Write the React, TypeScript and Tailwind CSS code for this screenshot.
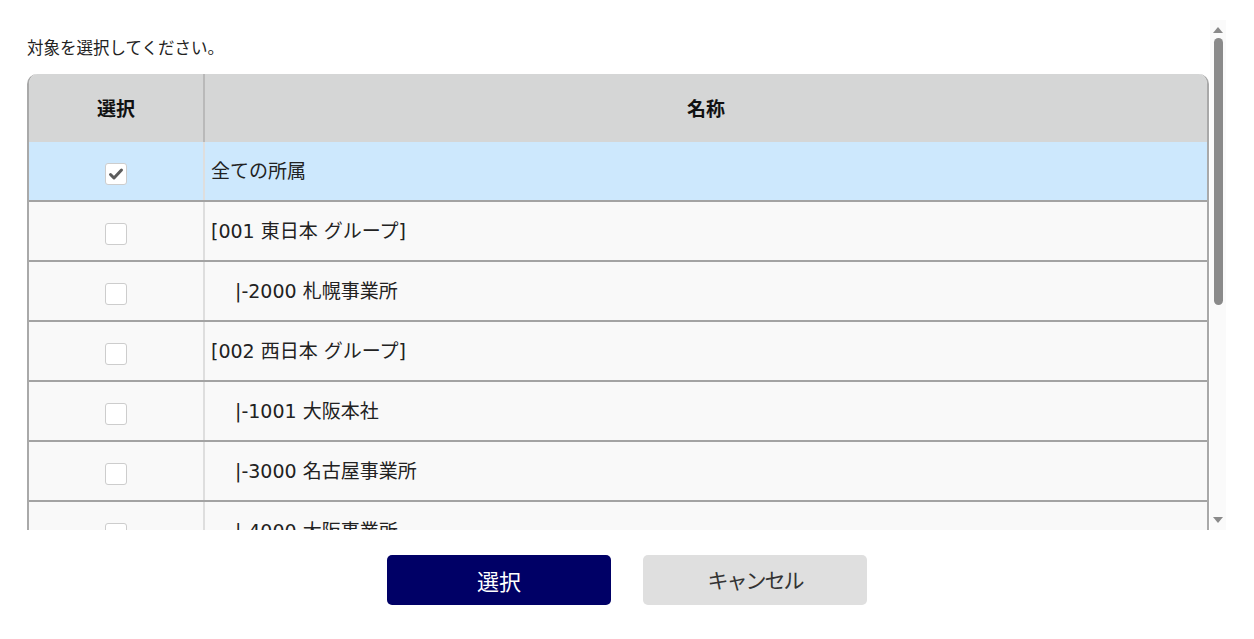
import React from "react";

const FONT = { fontFamily: '"Noto Sans CJK JP", "Noto Sans", sans-serif' };
const ROW_FONT = { fontFamily: '"DejaVu Sans", "Noto Sans CJK JP", sans-serif' };

type Row = { name: string; indent?: boolean; checked?: boolean };

const rows: Row[] = [
  { name: "全ての所属", checked: true },
  { name: "[001 東日本 グループ]" },
  { name: "|-2000 札幌事業所", indent: true },
  { name: "[002 西日本 グループ]" },
  { name: "|-1001 大阪本社", indent: true },
  { name: "|-3000 名古屋事業所", indent: true },
  { name: "|-4000 大阪事業所", indent: true },
];

function Check({ on }: { on?: boolean }) {
  return (
    <div className="w-[22px] h-[22px] rounded-[3px] border border-[#cdcdcd] bg-white flex items-center justify-center">
      {on && (
        <svg width="18" height="18" viewBox="0 0 18 18">
          <path d="M3.5 9.5 L7 13 L14.5 5" fill="none" stroke="#5c5c5c" strokeWidth="3" strokeLinecap="round" strokeLinejoin="round" />
        </svg>
      )}
    </div>
  );
}

export default function App() {
  return (
    <div className="w-[1254px] h-[639px] bg-white flex flex-col text-[#222]" style={FONT}>
      <div className="flex h-[530px] pt-[20px] pl-[27px] pr-[28px]">
        <div className="flex-1 overflow-hidden">
          <div className="pt-[15px] h-[54px] text-[16.5px] leading-[24px]">対象を選択してください。</div>
          <div className="rounded-t-[10px] overflow-hidden border-l-2 border-r-2 border-[#a9a9a9]">
            <div className="grid grid-cols-[176px_1fr] h-[68px] bg-[#d5d6d6] font-bold text-[19px] text-[#111]">
              <div className="flex items-center justify-center border-r-2 border-[#b9b9b9]">選択</div>
              <div className="flex items-center justify-center">名称</div>
            </div>
            {rows.map((r, i) => (
              <div
                key={i}
                className={
                  "grid grid-cols-[176px_1fr] h-[60px] border-b-2 border-[#a3a3a3] " +
                  (r.checked ? "bg-[#cde8fd]" : "bg-[#f9f9f9]")
                }
              >
                <div className="flex items-center justify-center pt-[6px] border-r-2 border-[#dedede]">
                  <Check on={r.checked} />
                </div>
                <div
                  className={"flex items-center text-[19px] " + (r.indent ? "pl-[30px]" : "pl-[6px]")}
                  style={ROW_FONT}
                >
                  {r.name}
                </div>
              </div>
            ))}
          </div>
        </div>
        <div className="w-[16px] ml-[1px] bg-[#fafafa] flex flex-col items-center pt-[7px] pb-[7px]">
          <svg width="10" height="6" viewBox="0 0 10 6">
            <path d="M5 0 L10 6 L0 6 Z" fill="#8a8a8a" />
          </svg>
          <div className="w-[9px] h-[267px] mt-[5px] rounded-full bg-[#8a8a8a]" />
          <div className="flex-1" />
          <svg width="10" height="6" viewBox="0 0 10 6">
            <path d="M0 0 L10 0 L5 6 Z" fill="#8a8a8a" />
          </svg>
        </div>
      </div>
      <div className="flex justify-center gap-[32px] pt-[25px]">
        <button className="w-[224px] h-[50px] rounded-[5px] bg-[#000066] text-white text-[22px]">選択</button>
        <button className="w-[224px] h-[50px] rounded-[5px] bg-[#dfdfdf] text-[#333] text-[21px] tracking-[-2px]">
          キャンセル
        </button>
      </div>
    </div>
  );
}
